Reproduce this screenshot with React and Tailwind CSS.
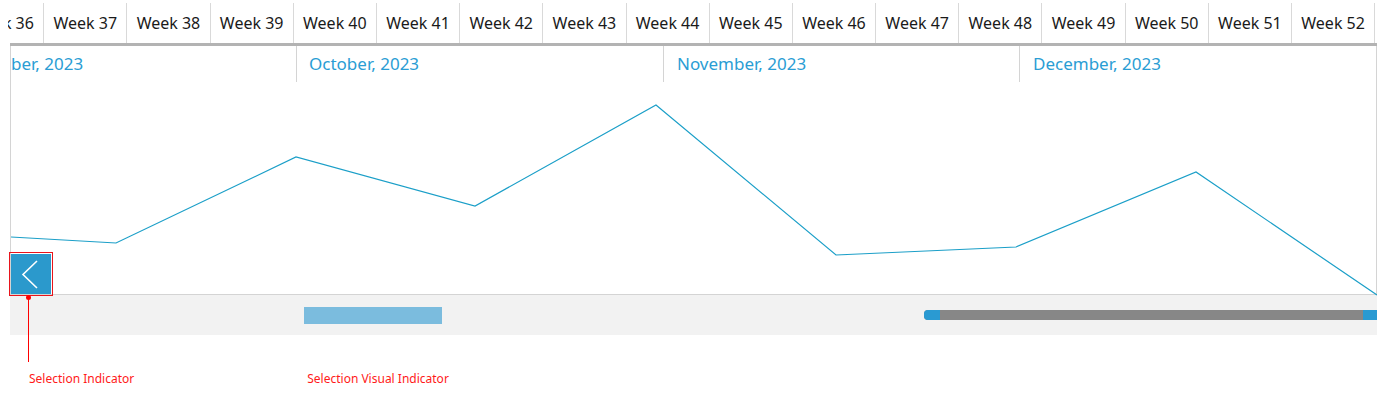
import React from 'react';

const weeks = [36, 37, 38, 39, 40, 41, 42, 43, 44, 45, 46, 47, 48, 49, 50, 51, 52];

const months = [
  { label: 'ber, 2023', width: 'w-[285px]', pad: 'pl-0' },
  { label: 'October, 2023', width: 'w-[367px]', pad: 'pl-[12px]' },
  { label: 'November, 2023', width: 'w-[356px]', pad: 'pl-[13px]' },
  { label: 'December, 2023', width: 'flex-1', pad: 'pl-[13px]' },
];

// chart points, relative to the plot body (x from 10, y from 82)
const points = [
  [0, 155], [105, 161], [285, 75], [464, 124], [645, 23],
  [825, 173], [1005, 165], [1185, 90], [1366, 213],
];

export default function App() {
  return (
    <div
      className="relative w-[1380px] h-[400px] bg-white overflow-hidden"
      style={{ fontFamily: '"Noto Sans", "Open Sans", sans-serif' }}
    >
      {/* week header */}
      <div className="ml-[8px] pt-[3px] overflow-hidden">
        <div className="flex ml-[-47px]">
          {weeks.map((w) => (
            <div
              key={w}
              className="shrink-0 w-[83.2px] h-[40px] flex items-center justify-center border-r border-[#d9d9d9] text-[16px] text-[#1a1a1a]"
            >
              Week {w}
            </div>
          ))}
        </div>
      </div>

      {/* chart */}
      <div className="ml-[10px] w-[1367px] border-t-[3px] border-[#b3b3b3]">
        <div className="border-l border-r border-[#d4d4d4]">
          <div className="flex h-[36px]">
            {months.map((m, i) => (
              <div
                key={m.label}
                className={`${m.width} ${m.pad} ${i > 0 ? 'border-l border-[#d4d4d4]' : ''} shrink-0 flex items-center text-[17px] text-[#2a9dd4]`}
              >
                {m.label}
              </div>
            ))}
          </div>
          <div className="relative h-[213px] border-b border-[#d4d4d4]">
            <svg className="absolute inset-0" width="1366" height="214" viewBox="0 0 1366 214">
              <polyline
                points={points.map((p) => p.join(',')).join(' ')}
                fill="none"
                stroke="#1b9fc8"
                strokeWidth="1.2"
              />
            </svg>
            <button className="absolute left-0 bottom-0 w-[40px] h-[40px] bg-[#2b99cc] outline outline-1 outline-offset-1 outline-[#e8141c] flex items-center justify-center">
              <svg width="40" height="40" viewBox="0 0 40 40">
                <polyline points="26,7 12,20.5 26,34" fill="none" stroke="#fff" strokeWidth="1.6" />
              </svg>
            </button>
          </div>
        </div>

        {/* scroll area */}
        <div className="h-[40px] bg-[#f2f2f2] flex items-center">
          <div className="ml-[294px] w-[138px] h-[17px] bg-[#7bbcde]" />
          <div className="ml-auto w-[453px] h-[10px] rounded-l-[4px] bg-[#878787] flex justify-between">
            <div className="w-[16px] h-full rounded-l-[4px] bg-[#2a9ad2]" />
            <div className="w-[14px] h-full bg-[#2a9ad2]" />
          </div>
        </div>
      </div>

      {/* annotations */}
      <div className="absolute left-[26px] top-[295px] w-[5px] h-[5px] rounded-full bg-[#ff0000]" />
      <div className="absolute left-[28px] top-[298px] w-px h-[64px] bg-[#ff0000]" />
      <div className="flex mt-[35px] text-[12px] text-[#ff1a1a]">
        <span className="ml-[29px]">Selection Indicator</span>
        <span className="ml-[173px]">Selection Visual Indicator</span>
      </div>
    </div>
  );
}
